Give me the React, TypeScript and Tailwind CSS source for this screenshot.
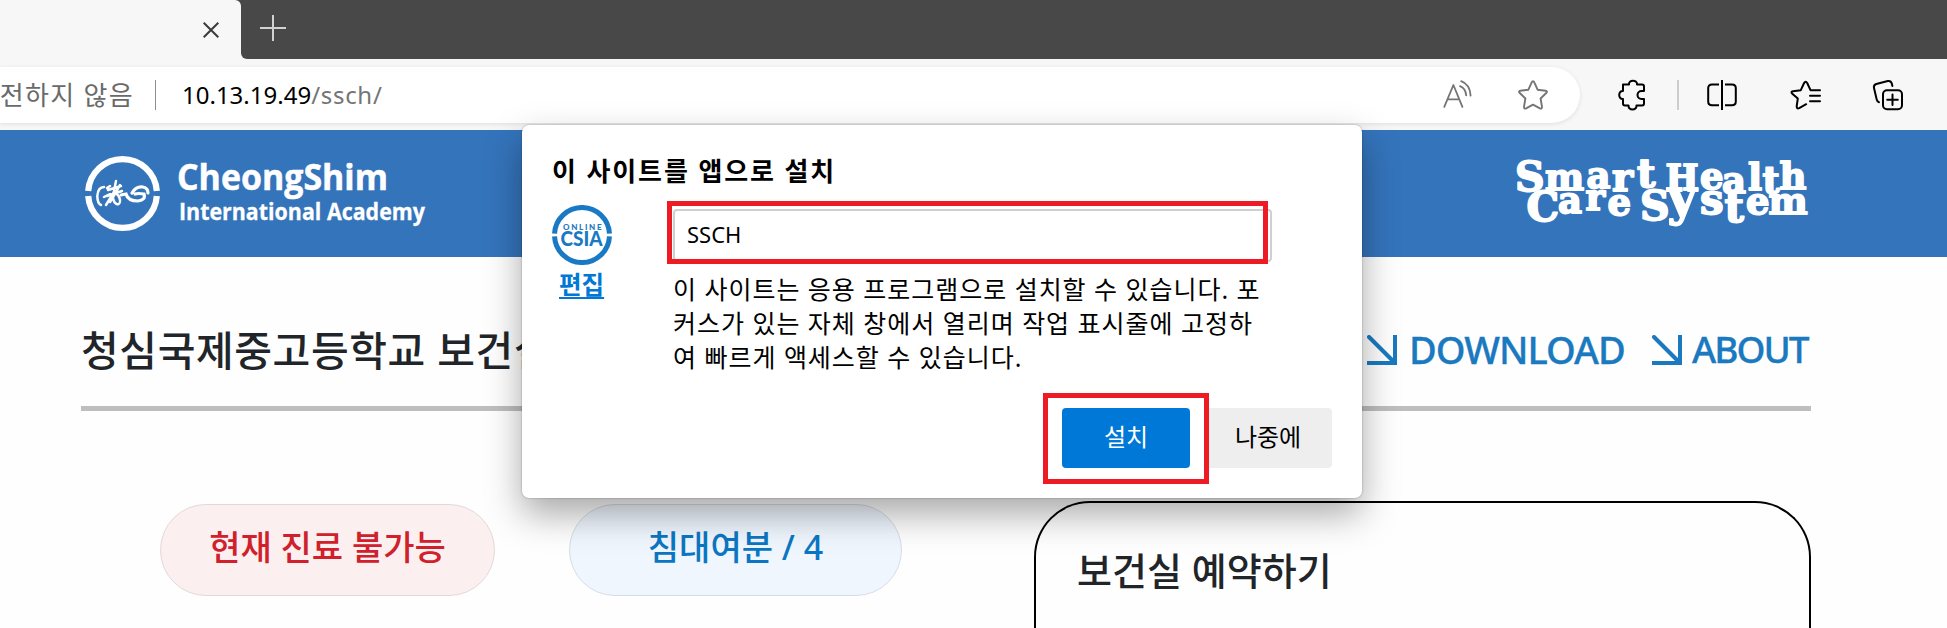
import React from "react";

const KR = "font-['Noto_Sans','Noto_Sans_CJK_KR',sans-serif]";

function TabStrip() {
  return (
    <div className="flex h-[59px] bg-[#f7f7f7]">
      <div className="h-full w-[241px] shrink-0 bg-[#484848]">
        <div className="flex h-full items-center justify-end rounded-tr-md bg-[#f7f7f7] pr-[22px]">
          <svg className="size-[16px]" viewBox="0 0 16 16" fill="none" stroke="#3b3b3b" strokeWidth="2">
            <path d="M0.700 0.700L15.300 15.300M15.300 0.700L0.700 15.300" />
          </svg>
        </div>
      </div>
      <div className="flex h-full grow items-start rounded-bl-md bg-[#484848] pt-[15px] pl-[19px]">
        <svg className="size-[26px]" viewBox="0 0 26 26" fill="none" stroke="#d2d2d2" strokeWidth="2">
          <path d="M13 0V26M0 13H26" />
        </svg>
      </div>
    </div>
  );
}

function Toolbar() {
  return (
    <div className="flex h-[71px] items-start bg-[#f7f7f7] pt-2">
      <div className="flex h-[56px] w-[1580px] shrink-0 items-center rounded-r-full bg-white shadow-[0_1px_4px_rgba(0,0,0,0.10)]">
        <div className="flex w-[155px] shrink-0 justify-end overflow-hidden pr-[21px] text-[26px] leading-[40px] whitespace-nowrap text-[#6a6a6a]">
          <span className="tracking-[1.300px]">안전하지 않음</span>
        </div>
        <div className="h-[30px] w-px bg-[#8f8f8f]" />
        <div className="ml-[26px] grow text-[24px] leading-[40px] text-black">
          10.13.19.49<span className="tracking-[0.700px] text-[#757575]">/ssch/</span>
        </div>
        <svg className="mr-[45px] h-[30px] w-[30px]" viewBox="0 0 30 30" fill="none" stroke="#757575" strokeWidth="1.8" strokeLinecap="round" strokeLinejoin="round">
          <path d="M1.3 26.8L10.4 5L19.4 26.8M4.3 19.4H16.4" />
          <path d="M17 6.2C20.4 7.5 22.8 11 23.2 15.4M18.2 1.2C23.6 3.2 27.2 8.8 27.6 15.6" />
        </svg>
        <svg className="mr-[32px] size-[30px]" viewBox="0 0 30 30" fill="none" stroke="#757575" strokeWidth="1.9" strokeLinejoin="round">
          <path d="M15 1.2Q15.8 1.2 16.3 2.4L19.6 9.7L27.5 10.7Q30 11.2 28.2 13L22.6 18.5L24 26.8Q24.1 29.4 21.9 28.3L15 24.6L8.1 28.3Q5.9 29.4 6 26.8L7.4 18.5L1.8 13Q0 11.2 2.5 10.7L10.4 9.7L13.7 2.4Q14.2 1.2 15 1.2Z" />
        </svg>
      </div>
      <div className="flex h-[56px] grow items-center pl-[38px]">
        <svg className="h-[32px] w-[28px]" viewBox="0 0 28 32" fill="none" stroke="#000" strokeWidth="2" strokeLinejoin="round">
          <path d="M5 5.5H11C10.6 3.4 12.6 1.8 15 1.8S19.4 3.4 19 5.5H24Q26 5.5 26 7.5V12H23.5A3.8 3.8 0 0 0 23.5 20H26V24.500Q26 26.500 24 26.500H18.500C18.600 29 16.800 30.400 14.500 30.400S10.400 29 10.500 26.500H7Q5 26.500 5 24.500V20C2.800 20.200 1.200 18.400 1.200 16S2.800 11.800 5 12Z" />
        </svg>
        <div className="ml-[31px] h-[30px] w-[2px] bg-[#cdcdcd]" />
        <svg className="ml-[28px] size-[30px]" viewBox="0 0 30 30" fill="none" stroke="#000" strokeWidth="2">
          <path d="M15 0V30M12 4.500H5Q1.200 4.500 1.200 8V21.500Q1.200 25.300 5 25.300H12M18 4.500H25Q28.800 4.500 28.800 8V21.500Q28.800 25.300 25 25.300H18" />
        </svg>
        <svg className="ml-[53px] h-[30px] w-[32px]" viewBox="0 0 32 30" fill="none" stroke="#000" strokeWidth="2" strokeLinecap="round" strokeLinejoin="round">
          <path d="M30 10.200H20.500L17.200 3Q15.600 0.500 14.100 3L10.800 10.200L3 11.200Q0.300 11.800 2.300 13.700L7.800 18.600L6.700 26.200Q6.700 29.400 9.200 28.100L16.200 24.200" />
          <path d="M20 15.700H30M20 21.200H30" />
        </svg>
        <svg className="ml-[50px] size-[32px]" viewBox="0 0 32 32" fill="none" stroke="#000" strokeWidth="2" strokeLinecap="round">
          <rect x="11" y="11.200" width="19" height="19" rx="4" />
          <path d="M20.500 15.500V26M15.200 20.700H25.800M20.400 7L19.700 4.300Q18.800 1.400 15.800 2L4.300 5Q1.300 6 2 9L4.700 20.500Q5.200 22.800 7 23.200" />
        </svg>
      </div>
    </div>
  );
}

function AcademyLogo() {
  return (
    <svg className="h-[84px] w-[350px]" viewBox="80 152 350 84">
      <g fill="none" stroke="#fff">
        <path d="M88.190 191A34.400 34.400 0 0 1 156.810 191M88.190 196A34.400 34.400 0 0 0 156.810 196" strokeWidth="6.200" />
        <path d="M104 187Q98 187 97.300 196Q97.500 204 101 205M107 188L110 186M104 197L110 194M106 205L114 192M108 190L121 186M116 181L113 196M107 196L122 191M120 185L110 202" strokeWidth="2.500" strokeLinecap="round" />
        <ellipse cx="116.500" cy="199" rx="3.200" ry="5.500" transform="rotate(-18 116.500 199)" strokeWidth="2.500" />
        <path d="M121 195L126 194Q128 201 138 201Q146 200 144 194Q138 193 135 194M132 193Q136 186 143 187Q148 188 148 193" strokeWidth="3.200" strokeLinecap="round" />
      </g>
      <g fill="#fff" className="font-['Open_Sans',sans-serif] font-bold">
        <text x="177" y="189.500" fontSize="35.500" textLength="211" lengthAdjust="spacingAndGlyphs" stroke="#fff" strokeWidth="0.500">CheongShim</text>
        <text x="179" y="220" fontSize="23.500" textLength="246" lengthAdjust="spacingAndGlyphs" stroke="#fff" strokeWidth="0.300">International Academy</text>
      </g>
    </svg>
  );
}

function SystemLogo() {
  return (
    <svg className="h-[84px] w-[320px]" viewBox="0 0 320 84">
      <g fill="#fff" stroke="#fff" strokeWidth="1.800" strokeLinejoin="round" fontSize="37" className="font-['DejaVu_Serif',serif] font-bold">
        <text x="15 45 86.500 112 137" y="41 40 38 41 37">
          <tspan fontSize="41">S</tspan>ma<tspan fontSize="40">rt</tspan>
        </text>
        <text x="165.500 200 222 248 262.500 279.500" y="39.500 39 43 39.500 42.500 38.500" fontSize="35">
          H<tspan fontSize="37">ealth</tspan>
        </text>
        <text x="26.500 58 85.500 107.500" y="71 63 60 65">
          <tspan fontSize="41">C</tspan>are
        </text>
        <text x="140 167.500 200 224.500 246 268.500" y="69.500 64 63.500 72 64 64">
          <tspan fontSize="41">S</tspan><tspan fontSize="50">y</tspan><tspan fontSize="42">st</tspan>em
        </text>
      </g>
    </svg>
  );
}

function LinkArrow() {
  return (
    <svg className="size-[30px]" viewBox="0 0 30 30" fill="none" stroke="#1a79bf" strokeWidth="4">
      <path d="M2 2L27 27" strokeLinecap="round" />
      <path d="M28 0V28H0" />
    </svg>
  );
}

function InstallDialog() {
  return (
    <div className="absolute top-[125px] left-[522px] h-[373px] w-[840px] rounded-[7px] bg-white px-[30px] pt-[27px] shadow-[0_0_2px_rgba(0,0,0,0.35),0_16px_36px_rgba(0,0,0,0.34)]">
      <h2 className="text-[26px] leading-[38px] font-bold tracking-[1.900px] whitespace-nowrap text-black">이 사이트를 앱으로 설치</h2>
      <div className="mt-[15px] flex">
        <div className="flex w-[121px] shrink-0 flex-col items-start">
          <svg className="size-[60px]" viewBox="0 0 60 60">
            <path d="M2.530 28.700A27.500 27.500 0 0 1 57.470 28.700M2.530 31.300A27.500 27.500 0 0 0 57.470 31.300" fill="none" stroke="#1a79c4" strokeWidth="5" />
            <g fill="#1a79c4" className="font-['Lato',sans-serif]">
              <text x="11" y="25" fontSize="8" fontWeight="900" textLength="38.500" lengthAdjust="spacing">ONLINE</text>
              <text x="8.500" y="40.500" fontSize="20" fontWeight="900" textLength="42" lengthAdjust="spacingAndGlyphs">CSIA</text>
            </g>
          </svg>
          <a className="mt-px ml-[7px] text-[24.500px] leading-[38px] font-bold text-[#0078d4] underline decoration-2 underline-offset-[3px]">편집</a>
        </div>
        <div className="w-[620px] pt-[4px]">
          <div className="flex h-[53px] w-[599px] items-center rounded-[4px] border-2 border-[#cfcfcf] bg-white pb-[2px] pl-[12px] text-[22px] text-black">
            <span>SSCH</span>
          </div>
          <p className="mt-[10px] text-[25px] leading-[34px] tracking-[0.980px] whitespace-nowrap text-black">
            이 사이트는 응용 프로그램으로 설치할 수 있습니다. 포
            <br />
            커스가 있는 자체 창에서 열리며 작업 표시줄에 고정하
            <br />여 빠르게 액세스할 수 있습니다.
          </p>
        </div>
      </div>
      <div className="mt-[34px] flex justify-end gap-[14px] text-[24px]">
        <button className="h-[60px] w-[128px] rounded-[4px] bg-[#0078d7] pb-[2px] text-white">설치</button>
        <button className="h-[60px] w-[128px] rounded-[4px] bg-[#eeeeee] pb-[2px] text-black">나중에</button>
      </div>
      <div className="absolute top-[76px] left-[145px] h-[63px] w-[601px] border-5 border-[#ed1c24]" />
      <div className="absolute top-[268px] left-[521px] h-[91px] w-[166px] border-5 border-[#ed1c24]" />
    </div>
  );
}

export default function App() {
  return (
    <div className={`relative h-[628px] w-[1947px] overflow-hidden bg-[#fefefe] ${KR}`}>
      <TabStrip />
      <Toolbar />
      <header className="flex h-[127px] items-start justify-between bg-[#3474bb] pr-[127px] pl-[80px]">
        <div className="pt-[22px]">
          <AcademyLogo />
        </div>
        <div className="pt-[20px]">
          <SystemLogo />
        </div>
      </header>
      <main className="pr-[136px] pl-[81px]">
        <div className="flex h-[154px] items-start justify-between border-b-5 border-[#bebebe]">
          <h1 className="mt-[65px] text-[41px] leading-[56px] font-medium tracking-[0.600px] whitespace-nowrap text-[#212529]">청심국제중고등학교 보건실</h1>
          <nav className="mt-[64px] flex text-[38px] leading-[56px] font-medium whitespace-nowrap text-[#1a79bf] [-webkit-text-stroke:0.3px_#1a79bf]">
            <a className="flex w-[285px]">
              <span className="mt-[14px] mr-[12px]"><LinkArrow /></span>
              <span className="tracking-[-1px]">DOWNLOAD</span>
            </a>
            <a className="flex w-[159px] text-[37px]">
              <span className="mt-[14px] mr-[10px]"><LinkArrow /></span>
              <span className="tracking-[-2px]">ABOUT</span>
            </a>
          </nav>
        </div>
        <div className="flex">
          <div className="mt-[93px] ml-[79px] flex h-[92px] w-[335px] items-center justify-center rounded-full border border-[#e3d9d9] bg-[#fbefef] pb-[6px] text-[34px] font-medium text-[#cf202c]">현재 진료 불가능</div>
          <div className="mt-[93px] ml-[74px] flex h-[92px] w-[333px] items-center justify-center rounded-full border border-[#d8dde3] bg-[#eff6fe] pb-[6px] text-[34px] font-medium text-[#0b76c2]">침대여분 / 4</div>
          <section className="mt-[90px] ml-auto h-[200px] w-[777px] rounded-t-[56px] border-2 border-b-0 border-black bg-[#fefefe] pt-[40px] pl-[41px]">
            <h2 className="text-[38px] leading-[54px] font-medium text-[#212529]">보건실 예약하기</h2>
          </section>
        </div>
      </main>
      <InstallDialog />
    </div>
  );
}
